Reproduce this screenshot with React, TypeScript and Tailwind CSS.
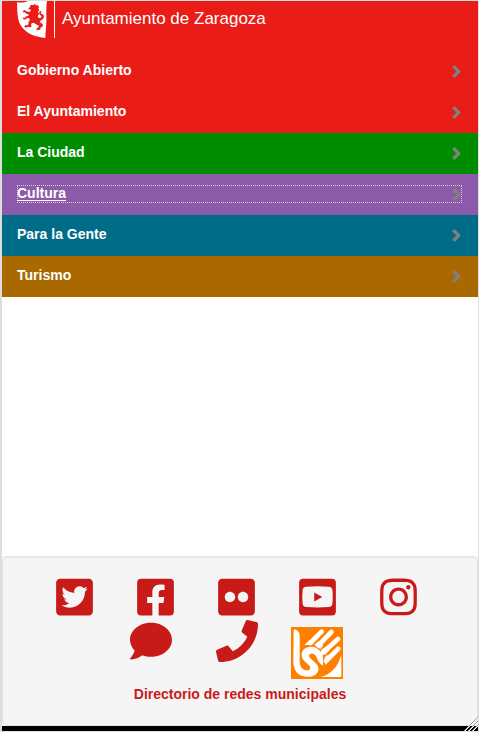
import {
  FaComment,
  FaFacebookSquare,
  FaFlickr,
  FaInstagram,
  FaPhone,
  FaTwitterSquare,
} from "react-icons/fa";

const sections = [
  { name: "Gobierno Abierto", color: "bg-[#ea1c18]", focused: false },
  { name: "El Ayuntamiento", color: "bg-[#ea1c18]", focused: false },
  { name: "La Ciudad", color: "bg-[#008c00]", focused: false },
  { name: "Cultura", color: "bg-[#8c5aa8]", focused: true },
  { name: "Para la Gente", color: "bg-[#006c88]", focused: false },
  { name: "Turismo", color: "bg-[#aa6800]", focused: false },
];

function YoutubeSquare({ className }: { className?: string }) {
  return (
    <svg viewBox="0 0 448 512" fill="currentColor" className={className} aria-hidden="true">
      <path
        fillRule="evenodd"
        d="M48 32H400A48 48 0 0 1 448 80V432A48 48 0 0 1 400 480H48A48 48 0 0 1 0 432V80A48 48 0 0 1 48 32ZM86 131C60 133 45 147 42 174C37 228 37 284 42 336C45 363 60 377 86 379Q224 390 362 379C388 377 403 363 406 336C411 284 411 228 406 174C403 147 388 133 362 131Q224 120 86 131ZM184 201L282 256L184 311Z"
      />
    </svg>
  );
}

const networks = [
  { name: "Twitter", Icon: FaTwitterSquare },
  { name: "Facebook", Icon: FaFacebookSquare },
  { name: "Flickr", Icon: FaFlickr },
  { name: "YouTube", Icon: YoutubeSquare },
  { name: "Instagram", Icon: FaInstagram },
];

function Shield() {
  return (
    <svg viewBox="0 0 90 111" className="h-[37px] w-[30px]" aria-hidden="true">
      <path
        fill="#fff"
        d="M0 4C14 6 24 4 32 0H90C87 14 88 34 88 58C88 78 85 94 85 111C57 108 29 100 13 76C2 60 1 40 0 4Z"
      />
      <path
        fill="#ea1c18"
        d="M39 14L44 11L48 13L53 9L57 13L63 13L66 18L64 23L67 28L63 32L66 39L62 46L66 52L71 51L74 46L69 42L66 37L68 31L74 29L71 35L74 39L80 42L81 49L77 55L70 59L68 64L73 66L78 72L76 77L70 80L71 85L66 87L58 86L58 83L64 79L66 74L57 70L50 65L44 67L42 72L44 77L38 79L32 77L27 80L22 77L24 73L31 73L35 69L34 63L39 57L36 51L29 52L24 56L18 54L17 50L23 50L28 46L34 45L35 40L28 38L24 34L18 34L18 30L23 27L27 30L32 32L38 33L42 29L39 25L34 24L35 20L40 19Z"
      />
    </svg>
  );
}

function SignLanguage() {
  return (
    <svg viewBox="0 0 156 156" className="size-[52px]" aria-hidden="true">
      <path fill="#ff8000" d="M0 0H156V156H0Z" />
      <path
        fill="#fff"
        d="M8 7C18 8 26 15 26 26V101C26 119 35 130 49 130C58 130 61 122 54 115L40 102C25 87 31 62 55 60C78 56 96 76 96 94V116C88 112 83 105 79 97C76 86 70 78 60 80C53 82 53 89 58 94L73 107C93 125 80 149 51 149C22 149 7 132 7 104Z"
      />
      <path fill="#fff" d="M151 84V150H88C120 143 139 122 151 84Z" />
      <g stroke="#fff" strokeWidth="14" strokeLinecap="round" fill="none">
        <path d="M92 14L58 48" />
        <path d="M121 15L82 55" />
        <path d="M141 36L95 77" />
        <path d="M142 65L105 102" />
      </g>
      <path fill="#fff" d="M40 54L56 39L68 50L58 54Z" />
      <path fill="#fff" d="M70 54L81 43L97 55L88 66Z" />
      <path fill="#fff" d="M90 69L103 60L117 68L102 84Z" />
      <path fill="#fff" d="M101 91L111 83L121 94L103 114Z" />
    </svg>
  );
}

export default function App() {
  return (
    <div className="relative flex min-h-screen flex-col border border-l-2 border-[#dedede] bg-white font-['Liberation_Sans',Arial,sans-serif] text-sm">
      <header className="bg-[#ea1c18] px-[15px] pb-[13px]">
        <a href="#inicio" className="flex items-start text-white">
          <Shield />
          <span className="ml-[7px] flex h-[37px] border-l border-white pl-[7px] text-[17px] leading-[35px]">
            Ayuntamiento de Zaragoza
          </span>
        </a>
      </header>

      <nav aria-label="Secciones">
        <ul>
          {sections.map(({ name, color, focused }) => (
            <li key={name} className={`${color} pt-[11px] pr-4 pb-3 pl-[15px]`}>
              <a
                href="#seccion"
                className={
                  focused
                    ? "flex h-[18px] items-start justify-between font-bold text-white outline-1 -outline-offset-1 outline-dotted outline-white/70"
                    : "flex h-[18px] items-start justify-between font-bold text-white"
                }
              >
                <span className={focused ? "leading-4 underline underline-offset-2" : "leading-4"}>
                  {name}
                </span>
                <svg viewBox="0 0 27 40" className="mt-[3px] mr-px h-[13px] w-[9px]" aria-hidden="true">
                  <path fill="#808080" d="M8 0L27 20L8 40L0 33L13 20L0 7Z" />
                </svg>
              </a>
            </li>
          ))}
        </ul>
      </nav>

      <div className="grow" />

      <footer className="border-b-[5px] border-black bg-white">
        <div className="rounded border border-[#e3e3e3] bg-[#f5f5f5] px-5 pt-[19px] pb-[21px] text-[#c81b18] shadow-[inset_0_1px_1px_rgba(0,0,0,0.05)]">
          <ul className="flex justify-center gap-11 pr-[7px]">
            {networks.map(({ name, Icon }) => (
              <li key={name}>
                <a href="#redes" aria-label={name}>
                  <Icon className="block h-[42px] w-[37px]" />
                </a>
              </li>
            ))}
          </ul>
          <ul className="mt-[2px] flex justify-center pr-2">
            <li className="mr-11">
              <a href="#contacto" aria-label="Quejas y sugerencias">
                <FaComment className="size-[42px]" />
              </a>
            </li>
            <li className="mr-[33px]">
              <a href="#telefono" aria-label="Teléfono">
                <FaPhone className="size-[42px]" />
              </a>
            </li>
            <li className="pt-[7px]">
              <a href="#signos" aria-label="Lengua de signos">
                <SignLanguage />
              </a>
            </li>
          </ul>
          <p className="mt-[5px] text-center font-bold leading-5">
            <a href="#directorio">Directorio de redes municipales</a>
          </p>
        </div>
      </footer>

      <svg
        viewBox="0 0 14 14"
        className="absolute right-0 bottom-0 size-[14px]"
        fill="none"
        aria-hidden="true"
      >
        <path stroke="#fff" d="M1 14L14 1M5 14L14 5M9 14L14 9" />
        <path stroke="#a0a0a0" d="M0 14L14 0M4 14L14 4M8 14L14 8" />
      </svg>
    </div>
  );
}
